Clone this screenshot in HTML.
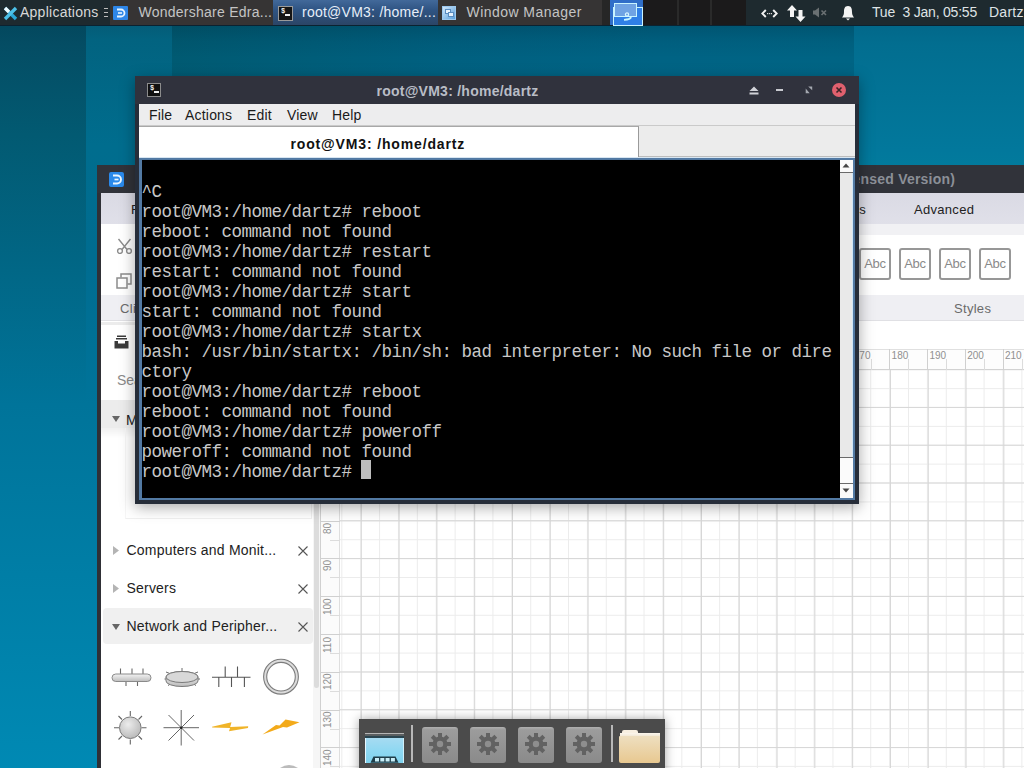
<!DOCTYPE html>
<html><head><meta charset="utf-8">
<style>
*{margin:0;padding:0;box-sizing:border-box}
html,body{width:1024px;height:768px;overflow:hidden;background:#086a86;font-family:"Liberation Sans",sans-serif}
.a{position:absolute}
.t{position:absolute;white-space:pre;line-height:1}
#desk{left:0;top:0;width:1024px;height:768px}
.b1{background:linear-gradient(#03485e 26px,#044d64 45px,#025a72 135px,#00749a 405px,#0088b2 745px,#0089b4 768px)}
.b2{background:linear-gradient(#045c78 26px,#026380 40px,#006d8e 145px,#006c90 260px,#00749a 405px,#0088b2 745px,#0089b4 768px)}
.b3{background:linear-gradient(rgba(0,10,20,.16) 26px,rgba(0,10,20,.05) 42px,rgba(0,10,20,0) 58px,rgba(60,200,255,0) 60px,rgba(60,200,255,.08) 165px),linear-gradient(90deg,#005a72,#006080 283px,#006384 483px,#006484 682px)}
.b4{background:linear-gradient(#02688a 26px,#026e90 45px,#02789c 150px,#02809e 200px)}
#panel{left:0;top:0;width:1024px;height:26px;background:#1e2a2f;border-bottom:1px solid #0b2230}
.mt{font-size:14px;color:#1a1a1a;letter-spacing:.2px}
.et{font-size:14px;color:#222;letter-spacing:.2px}
.gl{font-size:13px;color:#6a6a6a;letter-spacing:.3px}
.rl{font-size:10px;color:#909090}
.abc{width:32px;height:32px;border:2px solid #979797;border-radius:3px;font:13px/28px 'Liberation Sans';color:#8a8a8a;text-align:center;letter-spacing:-.3px;background:#fff}
.pt{font-size:14px;color:#d8d8d8;letter-spacing:.25px}
</style></head><body>
<div id="desk" class="a"><div class="a b1" style="left:0;top:0;width:86px;height:768px"></div><div class="a b2" style="left:86px;top:0;width:86px;height:768px"></div><div class="a b3" style="left:172px;top:0;width:682px;height:768px"></div><div class="a b4" style="left:854px;top:0;width:170px;height:768px"></div></div>

<!-- EDRAW WINDOW -->
<div id="edraw" class="a" style="left:96px;top:165px;width:940px;height:610px;background:#2f3036;overflow:hidden">
 <div class="a" style="left:0;top:0;width:940px;height:27.5px;background:#31333a"></div>
 <div class="a" style="left:12.5px;top:6.5px;width:15px;height:15px;background:#2a89ea;border-radius:2px"></div>
 <svg class="a" style="left:12.5px;top:6.5px" width="15" height="15" viewBox="0 0 15 15"><path d="M4 3.5 H8 A4 4 0 0 1 8 11.5 H4" fill="none" stroke="#eaf6ff" stroke-width="1.9"/><path d="M5.5 7.5 H9.5" stroke="#eaf6ff" stroke-width="1.7"/></svg>
 <div class="t" style="right:81px;top:6px;width:600px;text-align:right;font:bold 14px 'Liberation Sans';color:#8b8f97;letter-spacing:.2px">Wondershare EdrawMax (Unlicensed Version)</div>
 <!-- content -->
 <div class="a" style="left:5px;top:27.5px;width:935px;height:590px;background:#fff">
  <div class="a" style="left:0;top:0;width:935px;height:31.5px;background:linear-gradient(#dadae4,#e0e0e9)"></div>
  <div class="t et" style="left:30px;top:10.5px;font-size:13px;letter-spacing:.3px">File</div>
  <div class="t et" style="left:600px;width:165px;text-align:right;top:10.5px;font-size:13px;letter-spacing:.3px">Symbols</div>
  <div class="t et" style="left:813px;top:10.5px;font-size:13px;letter-spacing:.3px">Advanced</div>
  <div class="a" style="left:650px;top:31.5px;width:285px;height:11px;background:#f1f1f4"></div>
 </div>
 <!-- clipboard icons -->
 <svg class="a" style="left:20px;top:73px" width="17" height="16" viewBox="0 0 17 16" fill="none" stroke="#8c8c8c" stroke-width="1.4">
  <path d="M2.5 1 L11 11.5 M14.5 1 L6 11.5"/><circle cx="4" cy="13" r="2.4"/><circle cx="13" cy="13" r="2.4"/>
 </svg>
 <svg class="a" style="left:20px;top:108px" width="16" height="16" viewBox="0 0 16 16" fill="none" stroke="#8c8c8c" stroke-width="1.5">
  <rect x="1" y="5" width="10" height="10"/><path d="M5 4.5 V1 H15 V11 H11.5"/>
 </svg>
 <!-- group label band -->
 <div class="a" style="left:5px;top:130px;width:935px;height:26px;background:#efeff3;border-bottom:1px solid #e0e0e4"></div>
 <div class="t gl" style="left:24px;top:137px">Clipboard</div>
 <div class="t gl" style="left:858px;top:137px">Styles</div>
 <!-- Abc boxes -->
 <div class="a abc" style="left:723px;top:83px">Abc</div>
 <div class="a abc" style="left:763px;top:83px">Abc</div>
 <div class="a abc" style="left:803px;top:83px">Abc</div>
 <div class="a abc" style="left:843px;top:83px">Abc</div>
 <div class="a abc" style="left:883px;top:83px">Abc</div>
 <!-- horizontal ruler -->
 <div class="a" style="left:224px;top:184px;width:720px;height:20.5px;background:#fdfdfd;border-top:1px solid #e0e0e0;border-bottom:1px solid #d2d2d2"></div>
 <div class="t rl" style="left:266.4px;top:185.5px">40</div><div class="a" style="left:264.2px;top:184px;width:1px;height:20.5px;background:#d0d0d0"></div><div class="a" style="left:283.1px;top:194px;width:1px;height:10.5px;background:#dcdcdc"></div><div class="t rl" style="left:304.2px;top:185.5px">50</div><div class="a" style="left:302.0px;top:184px;width:1px;height:20.5px;background:#d0d0d0"></div><div class="a" style="left:320.9px;top:194px;width:1px;height:10.5px;background:#dcdcdc"></div><div class="t rl" style="left:342.0px;top:185.5px">60</div><div class="a" style="left:339.8px;top:184px;width:1px;height:20.5px;background:#d0d0d0"></div><div class="a" style="left:358.7px;top:194px;width:1px;height:10.5px;background:#dcdcdc"></div><div class="t rl" style="left:379.8px;top:185.5px">70</div><div class="a" style="left:377.6px;top:184px;width:1px;height:20.5px;background:#d0d0d0"></div><div class="a" style="left:396.5px;top:194px;width:1px;height:10.5px;background:#dcdcdc"></div><div class="t rl" style="left:417.6px;top:185.5px">80</div><div class="a" style="left:415.4px;top:184px;width:1px;height:20.5px;background:#d0d0d0"></div><div class="a" style="left:434.3px;top:194px;width:1px;height:10.5px;background:#dcdcdc"></div><div class="t rl" style="left:455.4px;top:185.5px">90</div><div class="a" style="left:453.2px;top:184px;width:1px;height:20.5px;background:#d0d0d0"></div><div class="a" style="left:472.1px;top:194px;width:1px;height:10.5px;background:#dcdcdc"></div><div class="t rl" style="left:493.2px;top:185.5px">100</div><div class="a" style="left:491.0px;top:184px;width:1px;height:20.5px;background:#d0d0d0"></div><div class="a" style="left:509.9px;top:194px;width:1px;height:10.5px;background:#dcdcdc"></div><div class="t rl" style="left:531.0px;top:185.5px">110</div><div class="a" style="left:528.8px;top:184px;width:1px;height:20.5px;background:#d0d0d0"></div><div class="a" style="left:547.7px;top:194px;width:1px;height:10.5px;background:#dcdcdc"></div><div class="t rl" style="left:568.8px;top:185.5px">120</div><div class="a" style="left:566.6px;top:184px;width:1px;height:20.5px;background:#d0d0d0"></div><div class="a" style="left:585.5px;top:194px;width:1px;height:10.5px;background:#dcdcdc"></div><div class="t rl" style="left:606.6px;top:185.5px">130</div><div class="a" style="left:604.4px;top:184px;width:1px;height:20.5px;background:#d0d0d0"></div><div class="a" style="left:623.3px;top:194px;width:1px;height:10.5px;background:#dcdcdc"></div><div class="t rl" style="left:644.4px;top:185.5px">140</div><div class="a" style="left:642.2px;top:184px;width:1px;height:20.5px;background:#d0d0d0"></div><div class="a" style="left:661.1px;top:194px;width:1px;height:10.5px;background:#dcdcdc"></div><div class="t rl" style="left:682.2px;top:185.5px">150</div><div class="a" style="left:680.0px;top:184px;width:1px;height:20.5px;background:#d0d0d0"></div><div class="a" style="left:698.9px;top:194px;width:1px;height:10.5px;background:#dcdcdc"></div><div class="t rl" style="left:720.0px;top:185.5px">160</div><div class="a" style="left:717.8px;top:184px;width:1px;height:20.5px;background:#d0d0d0"></div><div class="a" style="left:736.7px;top:194px;width:1px;height:10.5px;background:#dcdcdc"></div><div class="t rl" style="left:757.8px;top:185.5px">170</div><div class="a" style="left:755.6px;top:184px;width:1px;height:20.5px;background:#d0d0d0"></div><div class="a" style="left:774.5px;top:194px;width:1px;height:10.5px;background:#dcdcdc"></div><div class="t rl" style="left:795.6px;top:185.5px">180</div><div class="a" style="left:793.4px;top:184px;width:1px;height:20.5px;background:#d0d0d0"></div><div class="a" style="left:812.3px;top:194px;width:1px;height:10.5px;background:#dcdcdc"></div><div class="t rl" style="left:833.4px;top:185.5px">190</div><div class="a" style="left:831.2px;top:184px;width:1px;height:20.5px;background:#d0d0d0"></div><div class="a" style="left:850.1px;top:194px;width:1px;height:10.5px;background:#dcdcdc"></div><div class="t rl" style="left:871.2px;top:185.5px">200</div><div class="a" style="left:869.0px;top:184px;width:1px;height:20.5px;background:#d0d0d0"></div><div class="a" style="left:887.9px;top:194px;width:1px;height:10.5px;background:#dcdcdc"></div><div class="t rl" style="left:909.0px;top:185.5px">210</div><div class="a" style="left:906.8px;top:184px;width:1px;height:20.5px;background:#d0d0d0"></div><div class="a" style="left:925.7px;top:194px;width:1px;height:10.5px;background:#dcdcdc"></div><div class="t rl" style="left:946.8px;top:185.5px">220</div><div class="a" style="left:944.6px;top:184px;width:1px;height:20.5px;background:#d0d0d0"></div><div class="a" style="left:963.5px;top:194px;width:1px;height:10.5px;background:#dcdcdc"></div>
 <!-- vertical ruler -->
 <div class="a" style="left:224px;top:204.5px;width:20px;height:420px;background:#fbfbfb;border-left:1px solid #d0d0d0;border-right:1px solid #dedede"></div>
 <div class="t rl" style="left:226.5px;top:217.3px;transform:rotate(-90deg);transform-origin:0 0">40</div><div class="a" style="left:224px;top:204.4px;width:20px;height:1px;background:#d0d0d0"></div><div class="a" style="left:234px;top:223.3px;width:10px;height:1px;background:#dcdcdc"></div><div class="t rl" style="left:226.5px;top:255.1px;transform:rotate(-90deg);transform-origin:0 0">50</div><div class="a" style="left:224px;top:242.2px;width:20px;height:1px;background:#d0d0d0"></div><div class="a" style="left:234px;top:261.1px;width:10px;height:1px;background:#dcdcdc"></div><div class="t rl" style="left:226.5px;top:292.9px;transform:rotate(-90deg);transform-origin:0 0">60</div><div class="a" style="left:224px;top:280.0px;width:20px;height:1px;background:#d0d0d0"></div><div class="a" style="left:234px;top:298.9px;width:10px;height:1px;background:#dcdcdc"></div><div class="t rl" style="left:226.5px;top:330.7px;transform:rotate(-90deg);transform-origin:0 0">70</div><div class="a" style="left:224px;top:317.8px;width:20px;height:1px;background:#d0d0d0"></div><div class="a" style="left:234px;top:336.7px;width:10px;height:1px;background:#dcdcdc"></div><div class="t rl" style="left:226.5px;top:368.5px;transform:rotate(-90deg);transform-origin:0 0">80</div><div class="a" style="left:224px;top:355.6px;width:20px;height:1px;background:#d0d0d0"></div><div class="a" style="left:234px;top:374.5px;width:10px;height:1px;background:#dcdcdc"></div><div class="t rl" style="left:226.5px;top:406.3px;transform:rotate(-90deg);transform-origin:0 0">90</div><div class="a" style="left:224px;top:393.4px;width:20px;height:1px;background:#d0d0d0"></div><div class="a" style="left:234px;top:412.3px;width:10px;height:1px;background:#dcdcdc"></div><div class="t rl" style="left:226.5px;top:449.7px;transform:rotate(-90deg);transform-origin:0 0">100</div><div class="a" style="left:224px;top:431.2px;width:20px;height:1px;background:#d0d0d0"></div><div class="a" style="left:234px;top:450.1px;width:10px;height:1px;background:#dcdcdc"></div><div class="t rl" style="left:226.5px;top:487.5px;transform:rotate(-90deg);transform-origin:0 0">110</div><div class="a" style="left:224px;top:469.0px;width:20px;height:1px;background:#d0d0d0"></div><div class="a" style="left:234px;top:487.9px;width:10px;height:1px;background:#dcdcdc"></div><div class="t rl" style="left:226.5px;top:525.3px;transform:rotate(-90deg);transform-origin:0 0">120</div><div class="a" style="left:224px;top:506.8px;width:20px;height:1px;background:#d0d0d0"></div><div class="a" style="left:234px;top:525.7px;width:10px;height:1px;background:#dcdcdc"></div><div class="t rl" style="left:226.5px;top:563.1px;transform:rotate(-90deg);transform-origin:0 0">130</div><div class="a" style="left:224px;top:544.6px;width:20px;height:1px;background:#d0d0d0"></div><div class="a" style="left:234px;top:563.5px;width:10px;height:1px;background:#dcdcdc"></div><div class="t rl" style="left:226.5px;top:600.9px;transform:rotate(-90deg);transform-origin:0 0">140</div><div class="a" style="left:224px;top:582.4px;width:20px;height:1px;background:#d0d0d0"></div><div class="a" style="left:234px;top:601.3px;width:10px;height:1px;background:#dcdcdc"></div><div class="t rl" style="left:226.5px;top:638.7px;transform:rotate(-90deg);transform-origin:0 0">150</div><div class="a" style="left:224px;top:620.2px;width:20px;height:1px;background:#d0d0d0"></div><div class="a" style="left:234px;top:639.1px;width:10px;height:1px;background:#dcdcdc"></div>
 <!-- canvas -->
 <div class="a" style="left:244px;top:204.5px;width:700px;height:420px;background-color:#fff;
   background-image:linear-gradient(90deg,#d6d6d6 1px,transparent 1px),linear-gradient(#d6d6d6 1px,transparent 1px),linear-gradient(90deg,#ececec 1px,transparent 1px),linear-gradient(#ececec 1px,transparent 1px);
   background-size:37.8px 37.8px,37.8px 37.8px,18.9px 18.9px,18.9px 18.9px;
   background-position:20.8px 0,0 -0.9px,1.3px 0,0 -0.8px"></div>
 <!-- library sidebar -->
 <div class="a" style="left:5px;top:157px;width:212px;height:460px;background:#fff"></div>
 <div class="a" style="left:217px;top:157px;width:7px;height:460px;background:#f6f6f6"></div>
 <div class="a" style="left:217.5px;top:300px;width:5px;height:223px;background:#dcdcdc;border-radius:2.5px"></div>
 <div class="a" style="left:5px;top:157px;width:212px;height:3px;background:#ececec"></div>
 <svg class="a" style="left:17.5px;top:170px" width="15" height="14" viewBox="0 0 15 14"><path d="M3 0.5 H12 V2 H3 Z M2 3 H13 V4.5 H2 Z" fill="#3a3a3a"/><path d="M0.5 6 H14.5 V13.5 H0.5 Z" fill="#3a3a3a"/><path d="M4 6 V8.5 H11 V6" fill="#fff"/></svg>
 <div class="t" style="left:21px;top:207px;font:14px 'Liberation Sans';color:#8a8a8a">Search</div>
 <div class="a" style="left:5px;top:235px;width:212px;height:28px;background:#ececec"></div>
 <div class="a" style="left:5px;top:263px;width:212px;height:10px;background:linear-gradient(rgba(0,0,0,.06),rgba(0,0,0,0))"></div>
 <svg class="a" style="left:16px;top:251px" width="8" height="6" viewBox="0 0 8 6"><path d="M0 0 H8 L4 6 Z" fill="#666"/></svg>
 <div class="t et" style="left:30px;top:248px">My Library</div>
 <div class="a" style="left:29px;top:263px;width:187px;height:91px;border:1px solid #f0f0f0;border-top:none;border-left-color:#f6f6f6"></div>
 <svg class="a" style="left:17px;top:381px" width="6" height="9" viewBox="0 0 6 9"><path d="M0 0 L6 4.5 L0 9 Z" fill="#b4b4b4"/></svg>
 <div class="t et" style="left:30.5px;top:378px">Computers and Monit...</div>
 <svg class="a" style="left:201.5px;top:380.5px" width="10" height="10" viewBox="0 0 10 10"><path d="M0.5 0.5 L9.5 9.5 M9.5 0.5 L0.5 9.5" stroke="#555" stroke-width="1.1"/></svg>
 <svg class="a" style="left:17px;top:419px" width="6" height="9" viewBox="0 0 6 9"><path d="M0 0 L6 4.5 L0 9 Z" fill="#b4b4b4"/></svg>
 <div class="t et" style="left:30.5px;top:416px">Servers</div>
 <svg class="a" style="left:201.5px;top:418.5px" width="10" height="10" viewBox="0 0 10 10"><path d="M0.5 0.5 L9.5 9.5 M9.5 0.5 L0.5 9.5" stroke="#555" stroke-width="1.1"/></svg>
 <div class="a" style="left:7px;top:443px;width:210px;height:35.5px;background:#f0f0f0;border-radius:4px"></div>
 <svg class="a" style="left:16px;top:458.5px" width="8" height="6" viewBox="0 0 8 6"><path d="M0 0 H8 L4 6 Z" fill="#666"/></svg>
 <div class="t et" style="left:30.5px;top:454px">Network and Peripher...</div>
 <svg class="a" style="left:201.5px;top:456.5px" width="10" height="10" viewBox="0 0 10 10"><path d="M0.5 0.5 L9.5 9.5 M9.5 0.5 L0.5 9.5" stroke="#555" stroke-width="1.1"/></svg>
<svg class="a" style="left:5px;top:478px" width="212" height="132" viewBox="101 643 212 132">
  <defs>
   <linearGradient id="g1" x1="0" y1="0" x2="0" y2="1"><stop offset="0" stop-color="#f4f4f4"/><stop offset="1" stop-color="#bdbdbd"/></linearGradient>
   <radialGradient id="g2" cx=".4" cy=".35" r=".7"><stop offset="0" stop-color="#ececec"/><stop offset="1" stop-color="#b8b8b8"/></radialGradient>
  </defs>
  <g stroke="#6a6a6a" stroke-width="1.1" fill="none">
   <path d="M120.5 668.5 V674 M132 668.5 V674 M143 668.5 V674 M126 681.5 V686 M137.5 681.5 V686"/>
  </g>
  <rect x="112" y="674" width="39" height="7.5" rx="3.75" fill="url(#g1)" stroke="#8a8a8a" stroke-width="1"/>
  <g stroke="#6a6a6a" stroke-width="1" fill="none">
   <path d="M166 672 L171 674 M182 668 V671 M198 672 L193 674 M164.5 679 H168 M200 679 H196 M168 685.5 L172 683 M182 687 V684 M196 685.5 L192 683"/>
  </g>
  <path d="M166 677 A16 5.5 0 0 1 198 677 V681 A16 5.5 0 0 1 166 681 Z" fill="url(#g1)" stroke="#7a7a7a" stroke-width="1"/>
  <ellipse cx="182" cy="677" rx="16" ry="5.5" fill="#d8d8d8" stroke="#7a7a7a" stroke-width="1"/>
  <g stroke="#555" stroke-width="1.1" fill="none">
   <path d="M212 677.2 H250.5 M225.2 666.5 V677.2 M237.5 666.5 V677.2 M218.8 677.2 V687 M231.5 677.2 V687 M244.4 677.2 V687"/>
  </g>
  <circle cx="281" cy="676.7" r="15.9" fill="none" stroke="#dcdcdc" stroke-width="3"/>
  <circle cx="281" cy="676.7" r="17.4" fill="none" stroke="#7c7c7c" stroke-width="1.1"/>
  <circle cx="281" cy="676.7" r="14.3" fill="none" stroke="#7c7c7c" stroke-width="1.1"/>
  <g stroke="#666" stroke-width="1.1">
   <path d="M130.3 711 V716 M130.3 739.5 V744.5 M114 727.7 H119 M141.5 727.7 H146.5 M118.5 716 L122 719.5 M142 716 L138.5 719.5 M118.5 739.5 L122 736 M142 739.5 L138.5 736"/>
  </g>
  <circle cx="130.3" cy="727.7" r="10.8" fill="url(#g2)" stroke="#7a7a7a" stroke-width="1"/>
  <g stroke="#666" stroke-width="1">
   <path d="M181.2 710 V745.5 M163.5 727.7 H199 M168.5 715 L194 740.5 M194 715 L168.5 740.5"/>
  </g>
  <circle cx="181.2" cy="727.7" r="1.2" fill="#222"/>
  <path d="M212 726.8 L231.5 722.3 L230.2 727 L248.2 726.3 L248 728 L229 731.2 L230 727.9 L212.2 727.6 Z" fill="#f0b429"/>
  <path d="M262.5 734.6 L276 725 L279.5 725.5 L285.5 719.6 L299.5 722.3 L287 727.5 L283 727 Z" fill="#f3aa1a"/>
  <path d="M280 768 Q289 762 298 768 Z" fill="#bbb"/>
 </svg>
</div>

<div class="a b2" style="left:96px;top:0;width:1px;height:768px"></div>
<!-- DOCK -->
<div id="dock" class="a" style="left:359px;top:719px;width:306px;height:60px;background:#4b4b4b;box-shadow:0 0 10px rgba(0,0,0,.35)">
 <div class="a" style="left:6px;top:13.5px;width:38.5px;height:30.5px;background:linear-gradient(#b0dcf2,#8ed8f2 60%,#7fd2ee);border-left:1px solid #e8f8ff;border-right:1px solid #d0f0fa"></div>
 <div class="a" style="left:6px;top:13.5px;width:38.5px;height:1.5px;background:#b4b4b4"></div>
 <div class="a" style="left:6px;top:15px;width:38.5px;height:2px;background:#5a5e60"></div>
 <div class="a" style="left:6px;top:17px;width:38.5px;height:2px;background:#2a4550"></div>
 <svg class="a" style="left:10.5px;top:36.5px" width="29" height="7" viewBox="0 0 29 7"><path d="M0.5 6.8 L3.5 0.5 H25.5 L28.5 6.8 Z" fill="#1f3e4a"/><rect x="5" y="2" width="4" height="3.5" fill="#c8eef8"/><rect x="10.3" y="2" width="4" height="3.5" fill="#c8eef8"/><rect x="15.6" y="2" width="4" height="3.5" fill="#c8eef8"/><rect x="20.9" y="2" width="4" height="3.5" fill="#c8eef8"/></svg>
 <div class="a" style="left:51.5px;top:6px;width:2px;height:37px;background:#b8b8b8"></div>
<div class="a" style="left:62.5px;top:7.5px;width:36px;height:36.5px;background:linear-gradient(#b0b0b0,#9c9c9c 8%,#8a8a8a);border-radius:3px"></div><svg class="a" style="left:68.5px;top:13px" width="24" height="24" viewBox="-12 -12 24 24"><g fill="#626262"><circle r="7.5"/><rect x="-2" y="-11" width="4" height="5" transform="rotate(0)"/><rect x="-2" y="-11" width="4" height="5" transform="rotate(45)"/><rect x="-2" y="-11" width="4" height="5" transform="rotate(90)"/><rect x="-2" y="-11" width="4" height="5" transform="rotate(135)"/><rect x="-2" y="-11" width="4" height="5" transform="rotate(180)"/><rect x="-2" y="-11" width="4" height="5" transform="rotate(225)"/><rect x="-2" y="-11" width="4" height="5" transform="rotate(270)"/><rect x="-2" y="-11" width="4" height="5" transform="rotate(315)"/></g><circle r="3.2" fill="#8e8e8e"/></svg><div class="a" style="left:110.6px;top:7.5px;width:36px;height:36.5px;background:linear-gradient(#b0b0b0,#9c9c9c 8%,#8a8a8a);border-radius:3px"></div><svg class="a" style="left:116.6px;top:13px" width="24" height="24" viewBox="-12 -12 24 24"><g fill="#626262"><circle r="7.5"/><rect x="-2" y="-11" width="4" height="5" transform="rotate(0)"/><rect x="-2" y="-11" width="4" height="5" transform="rotate(45)"/><rect x="-2" y="-11" width="4" height="5" transform="rotate(90)"/><rect x="-2" y="-11" width="4" height="5" transform="rotate(135)"/><rect x="-2" y="-11" width="4" height="5" transform="rotate(180)"/><rect x="-2" y="-11" width="4" height="5" transform="rotate(225)"/><rect x="-2" y="-11" width="4" height="5" transform="rotate(270)"/><rect x="-2" y="-11" width="4" height="5" transform="rotate(315)"/></g><circle r="3.2" fill="#8e8e8e"/></svg><div class="a" style="left:158.7px;top:7.5px;width:36px;height:36.5px;background:linear-gradient(#b0b0b0,#9c9c9c 8%,#8a8a8a);border-radius:3px"></div><svg class="a" style="left:164.7px;top:13px" width="24" height="24" viewBox="-12 -12 24 24"><g fill="#626262"><circle r="7.5"/><rect x="-2" y="-11" width="4" height="5" transform="rotate(0)"/><rect x="-2" y="-11" width="4" height="5" transform="rotate(45)"/><rect x="-2" y="-11" width="4" height="5" transform="rotate(90)"/><rect x="-2" y="-11" width="4" height="5" transform="rotate(135)"/><rect x="-2" y="-11" width="4" height="5" transform="rotate(180)"/><rect x="-2" y="-11" width="4" height="5" transform="rotate(225)"/><rect x="-2" y="-11" width="4" height="5" transform="rotate(270)"/><rect x="-2" y="-11" width="4" height="5" transform="rotate(315)"/></g><circle r="3.2" fill="#8e8e8e"/></svg><div class="a" style="left:206.8px;top:7.5px;width:36px;height:36.5px;background:linear-gradient(#b0b0b0,#9c9c9c 8%,#8a8a8a);border-radius:3px"></div><svg class="a" style="left:212.8px;top:13px" width="24" height="24" viewBox="-12 -12 24 24"><g fill="#626262"><circle r="7.5"/><rect x="-2" y="-11" width="4" height="5" transform="rotate(0)"/><rect x="-2" y="-11" width="4" height="5" transform="rotate(45)"/><rect x="-2" y="-11" width="4" height="5" transform="rotate(90)"/><rect x="-2" y="-11" width="4" height="5" transform="rotate(135)"/><rect x="-2" y="-11" width="4" height="5" transform="rotate(180)"/><rect x="-2" y="-11" width="4" height="5" transform="rotate(225)"/><rect x="-2" y="-11" width="4" height="5" transform="rotate(270)"/><rect x="-2" y="-11" width="4" height="5" transform="rotate(315)"/></g><circle r="3.2" fill="#8e8e8e"/></svg>
 <div class="a" style="left:252px;top:6px;width:2px;height:37px;background:#b8b8b8"></div>
 <div class="a" style="left:262.5px;top:10.5px;width:16px;height:4px;background:#f8f0e2;border-radius:2px 2px 0 0"></div>
 <div class="a" style="left:260.5px;top:13.5px;width:40px;height:4px;background:linear-gradient(#fbf6ee,#efe4cf)"></div>
 <div class="a" style="left:260px;top:17px;width:41px;height:27px;background:linear-gradient(#eedfc0,#e8c890);border-radius:1px 1px 2px 2px"></div>
</div>

<!-- TERMINAL -->
<div id="term" class="a" style="left:135px;top:77px;width:724px;height:427px;background:#262d39;box-shadow:0 3px 14px rgba(0,0,0,.35)">
 <!-- titlebar -->
 <div class="a" style="left:0;top:-1px;width:724px;height:28px;background:#30323d"></div>
 <div class="a" style="left:12px;top:6px;width:14px;height:14px;background:#111;border:1px solid #8c8c8c"></div>
 <div class="t" style="left:15px;top:7px;font:bold 7px 'Liberation Mono';color:#eee">$</div>
 <div class="a" style="left:19px;top:14px;width:5px;height:1.5px;background:#eee"></div>
 <div class="t" style="left:241.5px;top:6px;font:bold 14px 'Liberation Sans';color:#b9bdc6;letter-spacing:.25px">root@VM3: /home/dartz</div>
 <svg class="a" style="left:614px;top:9px" width="10" height="9" viewBox="0 0 10 9"><path d="M5 0.5 L9.5 5 H0.5 Z M0.5 6.5 H9.5 V8.5 H0.5 Z" fill="#d0d2d8"/></svg>
 <div class="a" style="left:641px;top:12px;width:6.5px;height:1.6px;background:#c8cad0"></div>
 <svg class="a" style="left:670px;top:9px" width="9" height="8" viewBox="0 0 9 8"><path d="M3.2 0.5 L7.2 0.5 L7.2 4.3 Z M0.7 2.6 L4.7 7.3 L0.7 7.3 Z" fill="#a4a8b0"/></svg>
 <div class="a" style="left:697px;top:6px;width:14px;height:14px;border-radius:50%;background:#e0606e"></div>
 <svg class="a" style="left:697px;top:6px" width="14" height="14" viewBox="0 0 14 14"><path d="M4.5 4.5 L9.5 9.5 M9.5 4.5 L4.5 9.5" stroke="#3a2326" stroke-width="1.6"/></svg>
 <!-- menubar -->
 <div class="a" style="left:4px;top:27px;width:716px;height:22px;background:#ededee;border-bottom:1px solid #cacaca"></div>
 <div class="t mt" style="left:14px;top:31px">File</div>
 <div class="t mt" style="left:50px;top:31px">Actions</div>
 <div class="t mt" style="left:112px;top:31px">Edit</div>
 <div class="t mt" style="left:152px;top:31px">View</div>
 <div class="t mt" style="left:197px;top:31px">Help</div>
 <!-- tabbar -->
 <div class="a" style="left:4px;top:49px;width:716px;height:31px;background:#ececec;border-bottom:1px solid #bcbcbc"></div>
 <div class="a" style="left:4px;top:49px;width:500px;height:31px;background:#fff;border-top:1px solid #a8a8a8;border-right:1px solid #9a9a9a"></div>
 <div class="t" style="left:155.5px;top:58.5px;font:bold 14px 'Liberation Sans';color:#111;letter-spacing:.85px">root@VM3: /home/dartz</div>
 <div class="a" style="left:4px;top:80px;width:716px;height:1px;background:#d8e6f2"></div>
 <!-- terminal area -->
 <div class="a" style="left:4px;top:81px;width:716px;height:342px;background:#5279a3"></div>
 <div class="a" style="left:6.5px;top:83px;width:698px;height:338px;background:#000;overflow:hidden">
  <pre class="a" style="left:0;top:21.5px;margin:0;font:17.5px/20px 'Liberation Mono';color:#c8c8c8;letter-spacing:-.5px">^C
root@VM3:/home/dartz# reboot
reboot: command not found
root@VM3:/home/dartz# restart
restart: command not found
root@VM3:/home/dartz# start
start: command not found
root@VM3:/home/dartz# startx
bash: /usr/bin/startx: /bin/sh: bad interpreter: No such file or dire
ctory
root@VM3:/home/dartz# reboot
reboot: command not found
root@VM3:/home/dartz# poweroff
poweroff: command not found
root@VM3:/home/dartz# </pre>
  <div class="a" style="left:219.5px;top:300px;width:10px;height:19px;background:#bdbdbd"></div>
 </div>
 <!-- scrollbar -->
 <div class="a" style="left:705px;top:83px;width:13px;height:338px;background:#e9e9e9;border-right:1px solid #cfe6f6"></div>
 <div class="a" style="left:705px;top:83px;width:13px;height:13px;background:#fafafa;border-bottom:1px solid #6a6a6a"></div>
 <svg class="a" style="left:707px;top:86px" width="8" height="5" viewBox="0 0 8 5"><path d="M0.5 4.5 L4 0.5 L7.5 4.5 Z" fill="#444"/></svg>
 <div class="a" style="left:705px;top:380px;width:13px;height:27px;background:#fbfbfb;border-top:1px solid #6a6a6a;border-bottom:1px solid #6a6a6a"></div>
 <div class="a" style="left:705px;top:407px;width:13px;height:14px;background:#fafafa"></div>
 <svg class="a" style="left:707px;top:411px" width="8" height="5" viewBox="0 0 8 5"><path d="M0.5 0.5 L4 4.5 L7.5 0.5 Z" fill="#444"/></svg>
</div>

<!-- PANEL -->
<div id="panel" class="a">
 <!-- xfce X -->
 <svg class="a" style="left:2.5px;top:5.5px" width="15" height="15" viewBox="0 0 15 15">
  <path d="M2 2 L13 13" stroke="#2aa6d6" stroke-width="3.3"/>
  <path d="M13 2 L2 13" stroke="#4cc0e8" stroke-width="3.3"/>
  <path d="M2 2 L6 6" stroke="#f0fbff" stroke-width="3.3"/>
 </svg>
 <div class="t pt" style="left:20px;top:5px">Applications</div>
 <div class="a" style="left:104px;top:8px;width:4px;height:1px;background:#bdbdbd"></div>
 <div class="a" style="left:104px;top:12px;width:4px;height:1px;background:#bdbdbd"></div>
 <div class="a" style="left:104px;top:16px;width:4px;height:1px;background:#bdbdbd"></div>
 <!-- task 1 -->
 <div class="a" style="left:110px;top:0;width:163px;height:25px;background:#363434"></div>
 <div class="a" style="left:113px;top:6px;width:15px;height:14px;background:#2f86e8;border-radius:1px"></div>
 <svg class="a" style="left:113px;top:6px" width="15" height="14" viewBox="0 0 15 14"><path d="M4 3.5 H8 A3.5 3.5 0 0 1 8 10.5 H4" fill="none" stroke="#e8f4ff" stroke-width="1.8"/><path d="M5 7 H9" stroke="#e8f4ff" stroke-width="1.6"/></svg>
 <div class="t pt" style="left:138.5px;top:5px;color:#c4c4c4">Wondershare Edra...</div>
 <!-- task 2 active -->
 <div class="a" style="left:273px;top:0;width:165px;height:25px;background:linear-gradient(#42699a,#2f5483 40%,#2b4566)"></div>
 <div class="a" style="left:278px;top:6px;width:15px;height:15px;background:#151515;border:1px solid #9a9a9a"></div>
 <div class="t" style="left:281px;top:7px;font:bold 7px 'Liberation Mono';color:#eee">$</div>
 <div class="a" style="left:285px;top:14px;width:5px;height:1.5px;background:#eee"></div>
 <div class="t pt" style="left:302px;top:5px;color:#e6eef8">root@VM3: /home/...</div>
 <!-- task 3 -->
 <div class="a" style="left:438px;top:0;width:164px;height:25px;background:#363434"></div>
 <div class="a" style="left:442px;top:6px;width:14px;height:14px;background:linear-gradient(135deg,#cfe6fa,#5aa0dc);border:1px solid #9cc8ee"></div>
 <div class="a" style="left:445px;top:9px;width:6px;height:5px;border:1px solid #5a8cc0;background:#e8f4ff"></div>
 <div class="a" style="left:448px;top:12px;width:6px;height:5px;border:1px solid #5a8cc0;background:#e8f4ff"></div>
 <div class="t pt" style="left:466.5px;top:5px;color:#c4c4c4;letter-spacing:.45px">Window Manager</div>
 <!-- workspaces -->
 <div class="a" style="left:602px;top:0;width:8px;height:25px;background:#262626"></div>
 <div class="a" style="left:610px;top:0;width:33px;height:25px;background:#2f6ec8"></div>
 <div class="a" style="left:613px;top:6.5px;width:30px;height:19px;background:#2f7fe6;border:1.5px solid #c8f4ff"></div>
 <div class="a" style="left:614px;top:3px;width:23px;height:14px;background:#6fa3e3;border:1.5px solid #c8f4ff"></div>
 <svg class="a" style="left:620px;top:12px" width="14" height="10" viewBox="0 0 14 10"><circle cx="7" cy="2.5" r="1.6" fill="none" stroke="#d8f6ff" stroke-width="1.2"/><path d="M11 5 Q10.5 7.5 4 7.8" fill="none" stroke="#c8f4ff" stroke-width="1.8"/></svg>
 <div class="a" style="left:643px;top:0;width:103px;height:25px;background:#1b1a1b"></div>
 <div class="a" style="left:677px;top:0;width:1.5px;height:25px;background:#2a2a2a"></div>
 <div class="a" style="left:710px;top:0;width:1.5px;height:25px;background:#2a2a2a"></div>
 <!-- tray -->
 <svg class="a" style="left:761px;top:8.5px" width="17" height="9" viewBox="0 0 17 9"><path d="M4.8 1 L1.3 4.5 L4.8 8" fill="none" stroke="#f2f2f2" stroke-width="1.9"/><path d="M12.2 1 L15.7 4.5 L12.2 8" fill="none" stroke="#f2f2f2" stroke-width="1.9"/><rect x="6" y="4" width="1.2" height="1.2" fill="#d8d8d8"/><rect x="7.9" y="4" width="1.2" height="1.2" fill="#d8d8d8"/><rect x="9.8" y="4" width="1.2" height="1.2" fill="#d8d8d8"/></svg>
 <svg class="a" style="left:786px;top:4px" width="21" height="19" viewBox="0 0 21 19">
  <path d="M6 1 L11 6.5 H8 V13 H4 V6.5 H1 Z" fill="#f4f4f4"/>
  <path d="M14.5 18 L9.5 12.5 H12.5 V6 H16.5 V12.5 H19.5 Z" fill="#f4f4f4"/>
 </svg>
 <svg class="a" style="left:812px;top:7px" width="16" height="11" viewBox="0 0 16 11">
  <path d="M1 3.5 H3 L7 0.5 V10.5 L3 7.5 H1 Z" fill="#6a7072"/>
  <path d="M9.5 3.5 L14 8 M14 3.5 L9.5 8" stroke="#6a7072" stroke-width="1.6"/>
 </svg>
 <svg class="a" style="left:841px;top:5px" width="14" height="16" viewBox="0 0 14 16">
  <path d="M7 1 C3.5 1 3 4 3 7 C3 10 2 11 1 12.5 H13 C12 11 11 10 11 7 C11 4 10.5 1 7 1 Z" fill="#f4f4f4"/>
  <path d="M5 13.5 H9 L7 15.5 Z" fill="#f4f4f4"/>
 </svg>
 <div class="t pt" style="left:872px;top:5px;color:#dfe3e5;letter-spacing:-.2px">Tue  3 Jan, 05:55</div>
 <div class="t pt" style="left:989px;top:5px;color:#dfe3e5">Dartz</div>
</div>
</body></html>
